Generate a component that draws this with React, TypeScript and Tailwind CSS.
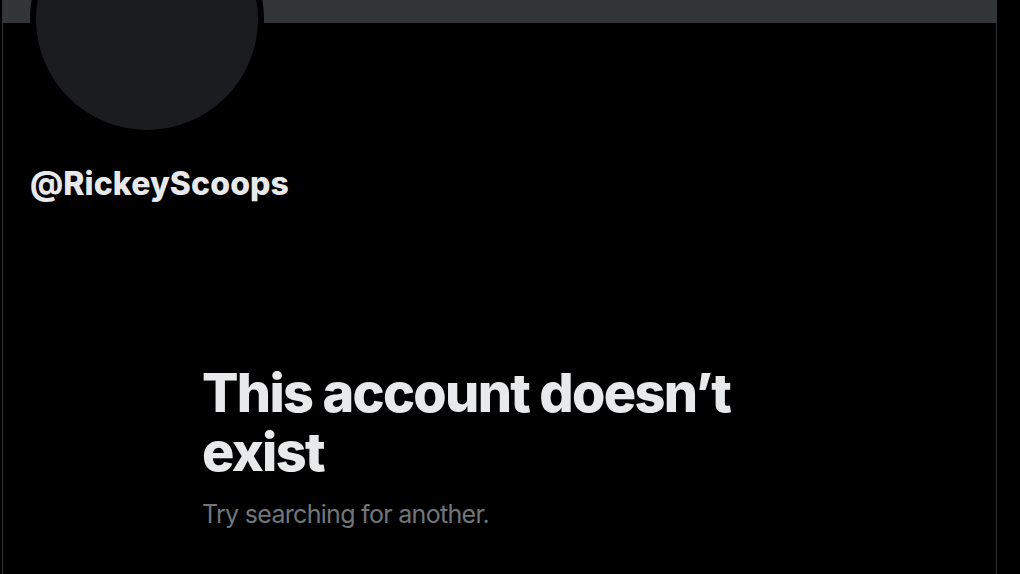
import React from "react";

export default function App() {
  return (
    <div className="w-[1020px] h-[574px] bg-black overflow-hidden" style={{ fontFamily: "Inter, 'Noto Sans', sans-serif" }}>
      <div className="relative ml-[2px] w-[995px] h-[574px] border-x border-[#2f3336]">
        <div className="h-[23px] bg-[#333639]" />
        <div className="absolute left-[27px] top-[-98px] w-[234px] h-[234px] rounded-full bg-black p-[6px]">
          <div className="w-full h-full rounded-full bg-[#1b1c1f]" />
        </div>
        <div className="pt-[143px] pl-[27px]">
          <div className="text-[32px] leading-[36px] font-extrabold text-[#e7e9ea] tracking-[0.1px]">@RickeyScoops</div>
        </div>
        <div className="pt-[161px] pl-[199px]">
          <div className="text-[54px] leading-[59px] font-extrabold text-[#e7e9ea] w-[580px] tracking-[-1.7px]">
            This account doesn’t exist
          </div>
          <div className="mt-[17px] text-[25px] leading-[32px] text-[#71767b] tracking-[-0.7px]">Try searching for another.</div>
        </div>
      </div>
    </div>
  );
}
